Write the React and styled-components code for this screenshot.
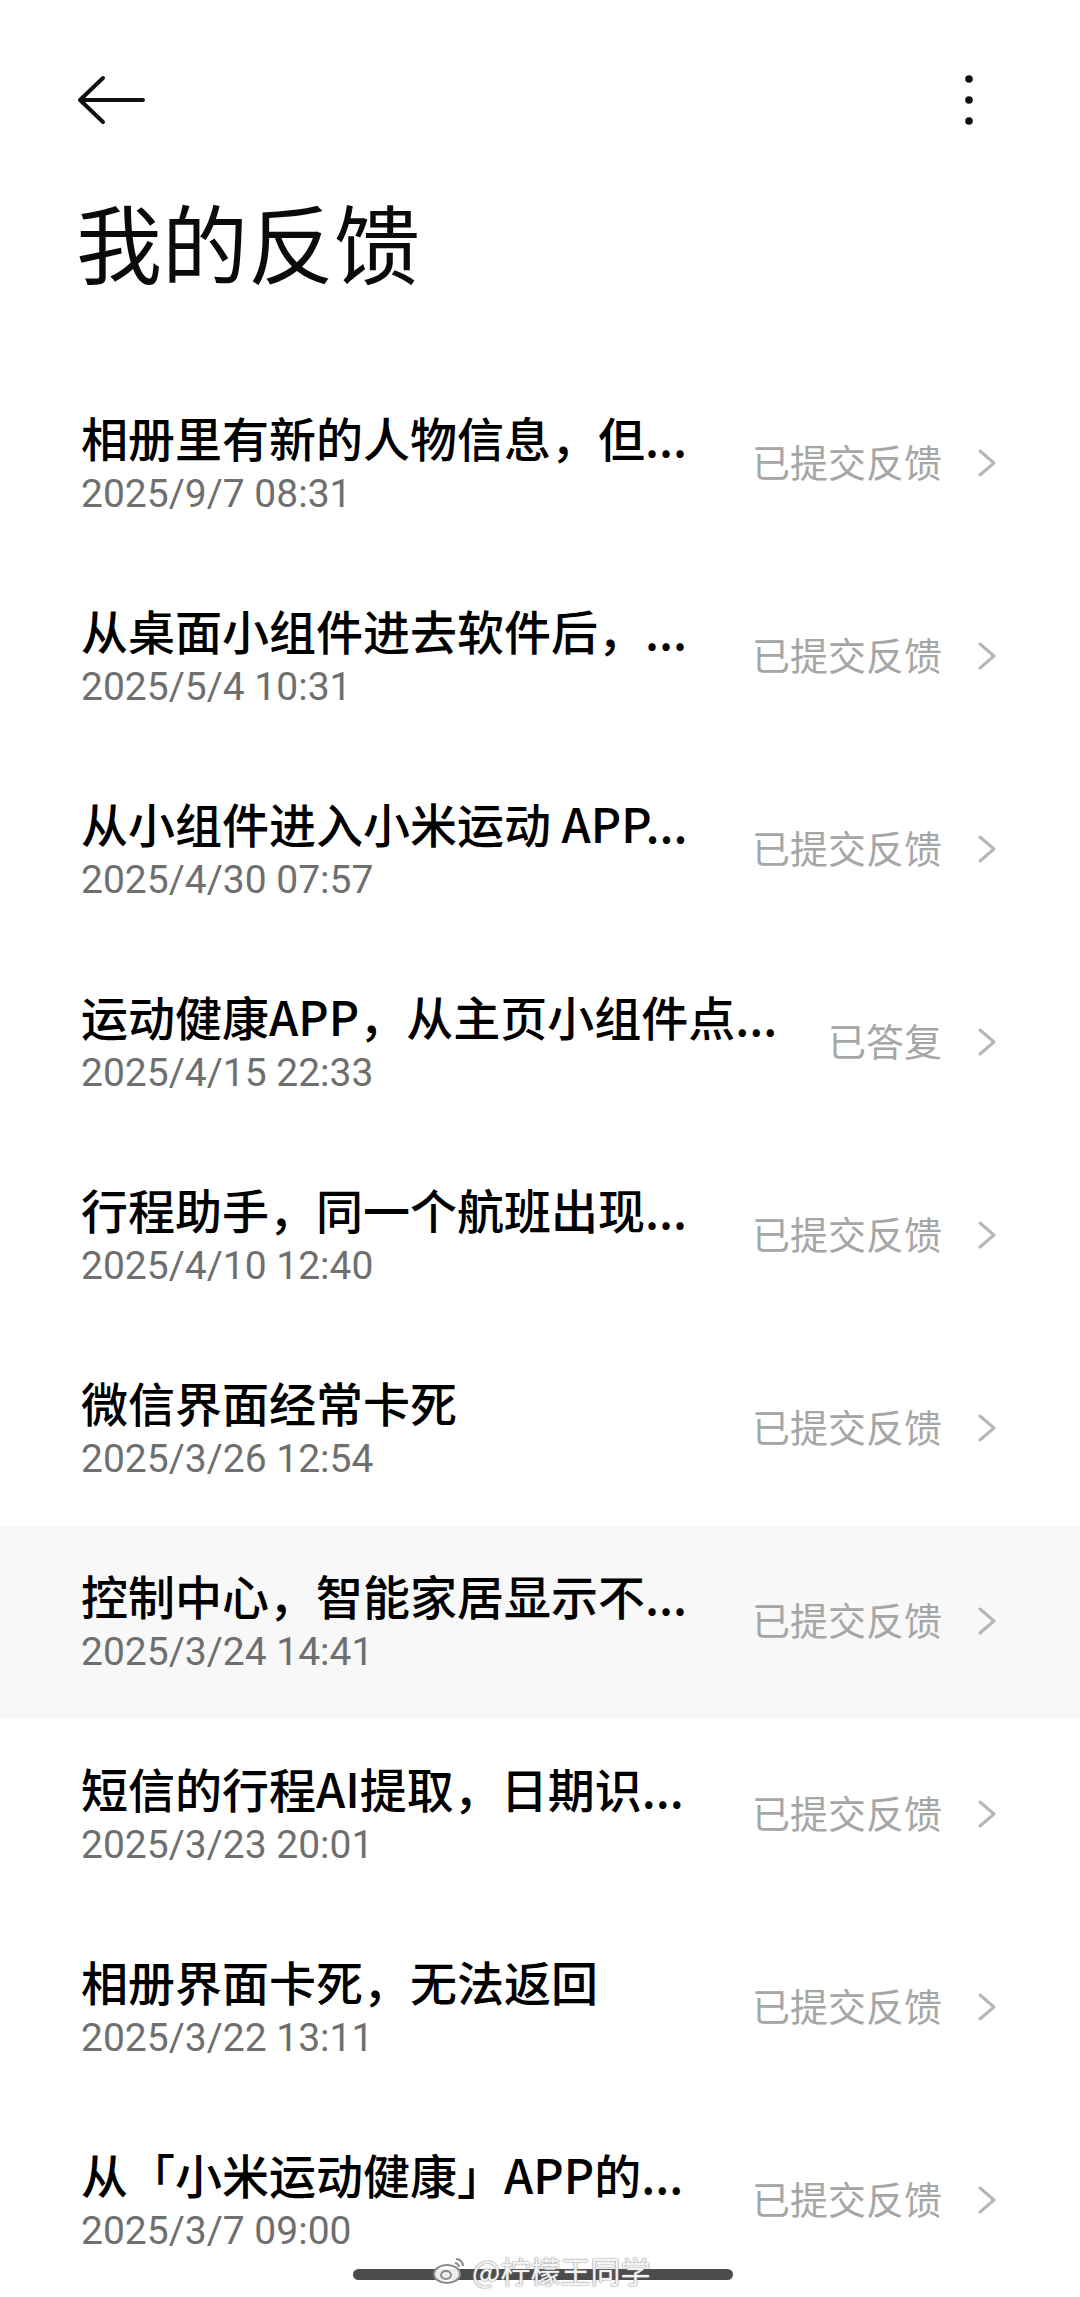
import React from 'react'
import styled, { createGlobalStyle } from 'styled-components'

const GlobalStyle = createGlobalStyle`
html, body {
  margin: 0;
  padding: 0;
  background: #fff;
}
body {
  font-family: "Noto Sans CJK SC", "Noto Sans", sans-serif;
  -webkit-font-smoothing: antialiased;
}
`

const Page = styled.div`
position: relative;
width: 1080px;
min-height: 2297px;
background: #fff;
overflow: hidden;
`
const TopBar = styled.div`
height: 200px;
display: flex;
align-items: center;
justify-content: space-between;
padding: 0 101px 0 76px;
box-sizing: border-box;
svg{
  display: block;
}
`
const PageTitle = styled.h1`
margin: -6px 0 80px;
padding-left: 76px;
font-size: 86px;
line-height: 94px;
font-weight: 400;
color: #0a0a0a;
`
const List = styled.div`
display: flex;
flex-direction: column;
`
const Row = styled.div`
height: 193px;
display: flex;
align-items: center;
padding: 0 83px 0 81px;
box-sizing: border-box;
background: ${props => props.active ? '#f8f8f8' : '#fff'};
`
const Texts = styled.div`
flex: 1;
min-width: 0;
display: flex;
flex-direction: column;
`
const Title = styled.div`
font-size: 47px;
line-height: 58px;
font-weight: 500;
color: #000;
white-space: nowrap;
`
const Date = styled.div`
font-family: Roboto, "Noto Sans CJK SC", sans-serif;
font-size: 39px;
line-height: 56px;
color: #6f6f6f;
`
const Status = styled.div`
flex-shrink: 0;
margin-left: 24px;
padding-bottom: 8px;
font-size: 38px;
line-height: 50px;
color: #a6a6a6;
`
const Chevron = styled.svg`
flex-shrink: 0;
margin-left: 35px;
margin-bottom: 4px;
display: block;
`
const Watermark = styled.div`
position: absolute;
left: 432px;
top: 2252px;
display: flex;
align-items: center;
gap: 6px;
font-size: 30px;
line-height: 36px;
color: rgba(255, 255, 255, 0.92);
text-shadow: 0 0 2px #8a8a8a, 0 0 1px #8a8a8a;
z-index: 2;
`
const HomeBar = styled.div`
position: absolute;
left: 353px;
bottom: 18px;
width: 380px;
height: 11px;
border-radius: 6px;
background: #4b4b4b;
z-index: 1;
`

const items = [
  { title: '相册里有新的人物信息，但...', date: '2025/9/7 08:31', status: '已提交反馈' },
  { title: '从桌面小组件进去软件后，...', date: '2025/5/4 10:31', status: '已提交反馈' },
  { title: '从小组件进入小米运动 APP...', date: '2025/4/30 07:57', status: '已提交反馈' },
  { title: '运动健康APP，从主页小组件点...', date: '2025/4/15 22:33', status: '已答复' },
  { title: '行程助手，同一个航班出现...', date: '2025/4/10 12:40', status: '已提交反馈' },
  { title: '微信界面经常卡死', date: '2025/3/26 12:54', status: '已提交反馈' },
  { title: '控制中心，智能家居显示不...', date: '2025/3/24 14:41', status: '已提交反馈', active: true },
  { title: '短信的行程AI提取，日期识...', date: '2025/3/23 20:01', status: '已提交反馈' },
  { title: '相册界面卡死，无法返回', date: '2025/3/22 13:11', status: '已提交反馈' },
  { title: '从「小米运动健康」APP的...', date: '2025/3/7 09:00', status: '已提交反馈' },
]

function BackIcon() {
  return (
    <svg width="70" height="50" viewBox="0 0 70 50" fill="none">
      <path d="M4 25 H67 M27 3 L4 25 L27 47" stroke="#111" strokeWidth="4" strokeLinecap="round" strokeLinejoin="round" />
    </svg>
  )
}

function MoreIcon() {
  return (
    <svg width="20" height="60" viewBox="0 0 20 60">
      <circle cx="10" cy="9" r="3.8" fill="#111" />
      <circle cx="10" cy="30" r="3.8" fill="#111" />
      <circle cx="10" cy="51" r="3.8" fill="#111" />
    </svg>
  )
}

function WeiboLogo() {
  return (
    <svg width="34" height="30" viewBox="0 0 34 30" fill="none" stroke="#8a8a8a" strokeWidth="2">
      <ellipse cx="15" cy="19" rx="13" ry="9" fill="rgba(255,255,255,0.9)" />
      <ellipse cx="14" cy="20" rx="5" ry="4" />
      <path d="M24 4 C28 4 31 7 31 11" />
      <path d="M23 8 C25 8 27 10 27 12" />
    </svg>
  )
}

export default function App() {
  return (
    <Page>
      <GlobalStyle />
      <TopBar>
        <BackIcon />
        <MoreIcon />
      </TopBar>
      <PageTitle>我的反馈</PageTitle>
      <List>
        {items.map((item, i) => (
          <Row key={i} active={item.active}>
            <Texts>
              <Title>{item.title}</Title>
              <Date>{item.date}</Date>
            </Texts>
            <Status>{item.status}</Status>
            <Chevron width="20" height="28" viewBox="0 0 20 28" fill="none">
              <path d="M3 2 L17 14 L3 26" stroke="#b6b6b6" strokeWidth="3" strokeLinecap="round" strokeLinejoin="round" />
            </Chevron>
          </Row>
        ))}
      </List>
      <Watermark>
        <WeiboLogo />
        <span>@柠檬王同学</span>
      </Watermark>
      <HomeBar />
    </Page>
  )
}
